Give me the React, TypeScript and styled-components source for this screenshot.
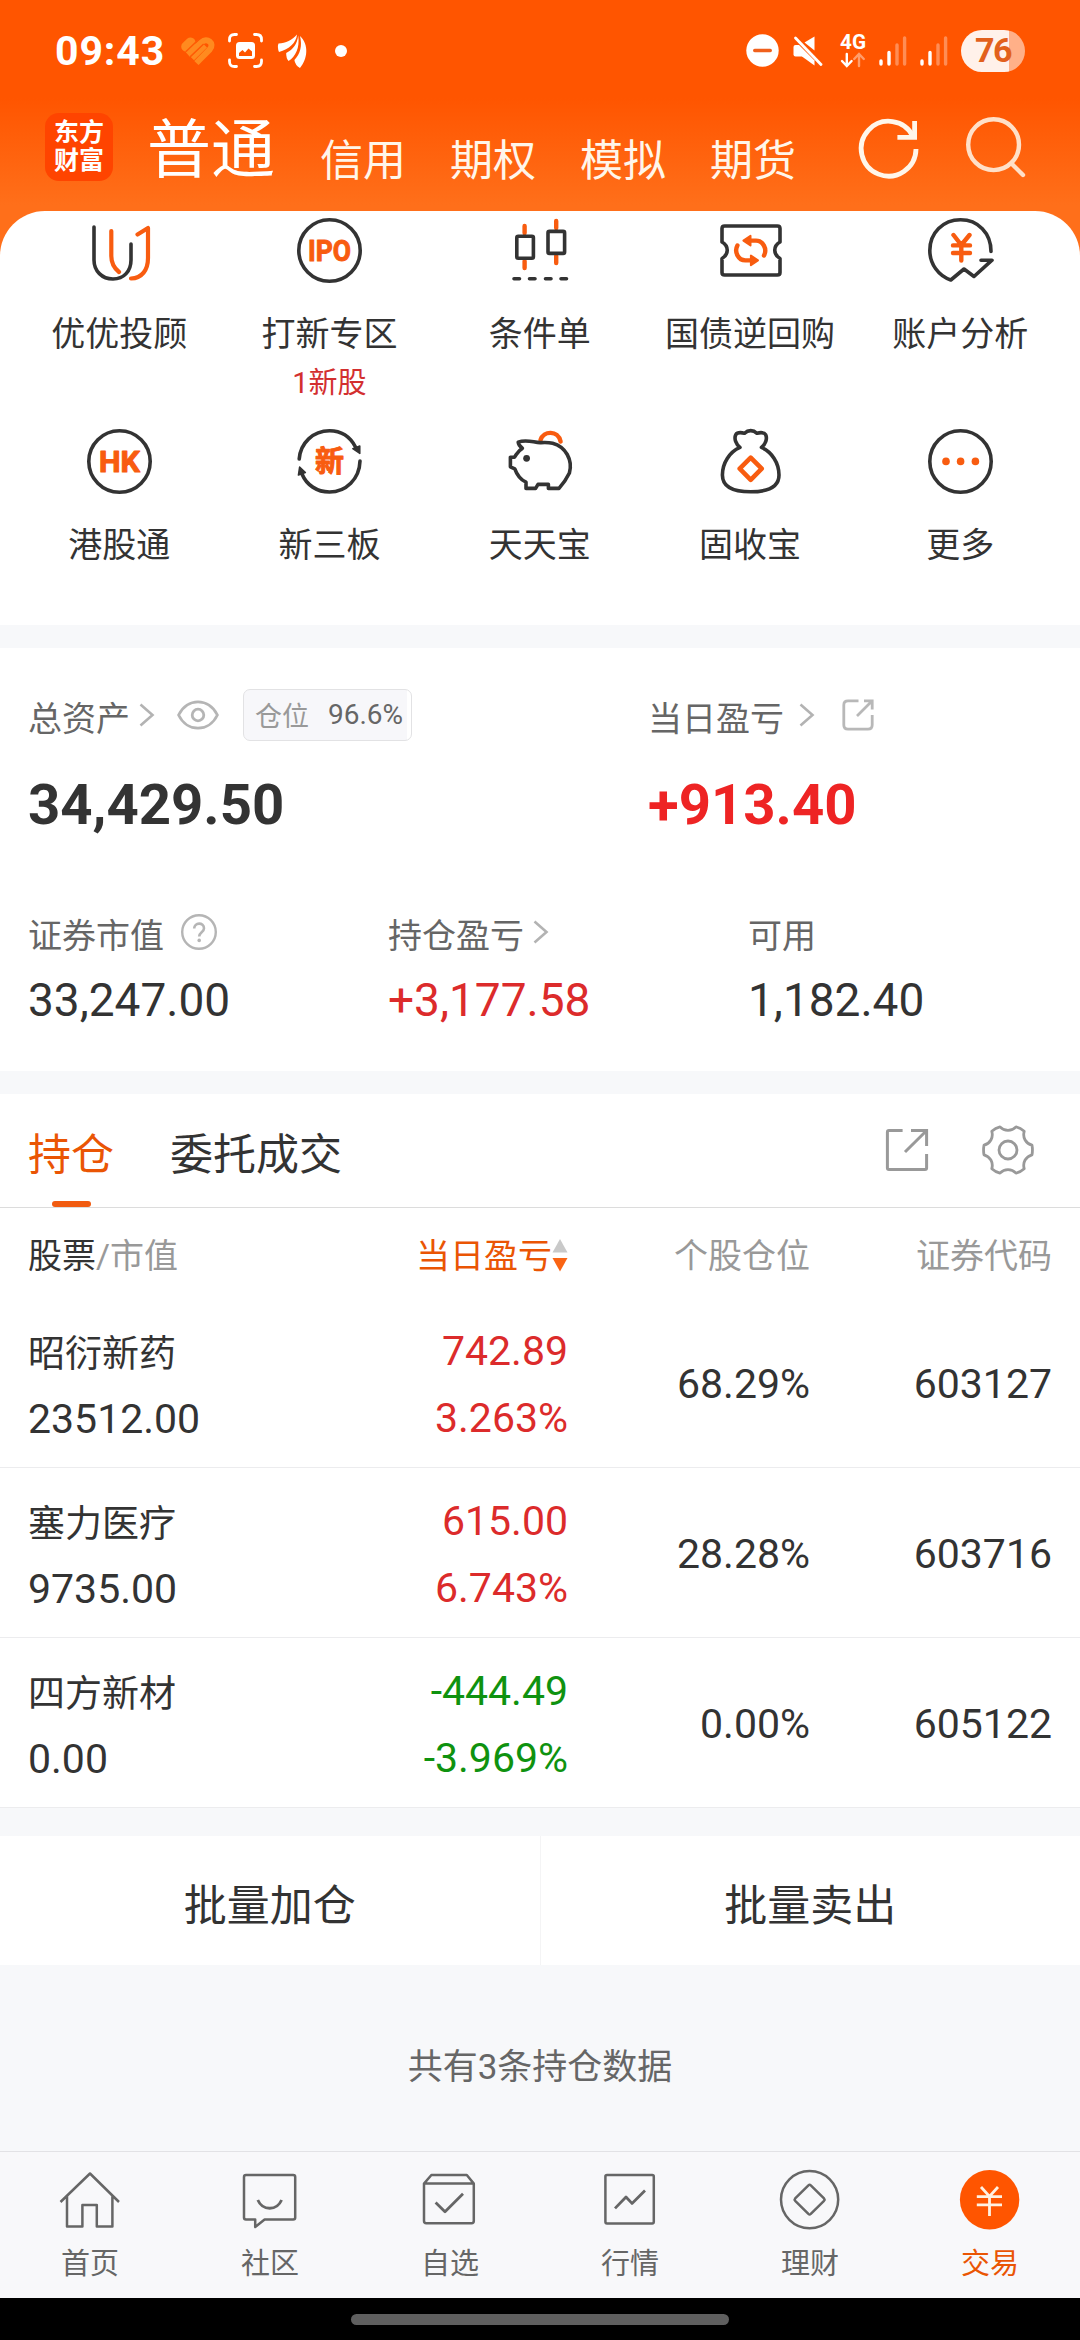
import React from 'react';
import styled, { createGlobalStyle, css } from 'styled-components';

const ORANGE = '#ea5504';
const ICON_ORANGE = '#f85c10';
const DARK = '#333333';
const RED = '#dc2b2b';
const GREEN = '#0f920f';
const BAND = '#f7f8fa';

const GlobalStyle = createGlobalStyle`
  * { box-sizing: border-box; }
  html, body { margin: 0; padding: 0; background: #000; }
  body {
    font-family: Roboto, "Noto Sans CJK SC", sans-serif;
    color: ${DARK};
    -webkit-font-smoothing: antialiased;
  }
  svg { display: block; flex: none; overflow: visible; }
`;

const Screen = styled.div`
  width: 1080px;
  height: 2340px;
  display: flex;
  flex-direction: column;
  background: ${BAND};
  overflow: hidden;
  white-space: nowrap;
`;

/* ---------- header ---------- */
const Header = styled.header`
  height: 211px;
  flex: none;
  position: relative;
`;

const HeaderBackdrop = styled.div`
  background: linear-gradient(#ff5500 0, #ff5500 98px, #ff6f1a 205px, #ff6f1a 100%);
  flex: none;
`;

const StatusBar = styled.div`
  height: 100px;
  padding: 0 55px;
  display: flex;
  justify-content: space-between;
  align-items: flex-start;
  color: #fff;
`;

const StatusGroup = styled.div`
  height: 101px;
  display: flex;
  align-items: center;
`;

const Clock = styled.span`
  font-size: 41px;
  font-weight: 700;
  letter-spacing: 0.9px;
  line-height: 48px;
  width: 126px;
`;

const Spacer = styled.span<{ $w: number }>`
  flex: none;
  width: ${(p) => p.$w}px;
`;

const Battery = styled.span`
  width: 64px;
  height: 42px;
  margin-right: 0;
  border-radius: 21px;
  background: linear-gradient(90deg, #fff1ea 0, #fff1ea 48px, #ffb088 48px);
  color: #e2601c;
  font-size: 34px;
  font-weight: 700;
  line-height: 41px;
  text-align: center;
  letter-spacing: -1.5px;
`;

const AppBar = styled.div`
  height: 111px;
  padding: 13px 54px 0 45px;
  display: flex;
  align-items: flex-start;
  color: #fff;
`;

const Logo = styled.div`
  width: 68px;
  height: 68px;
  padding-top: 6px;
  border-radius: 14px;
  background: #ff4400;
  font-size: 25px;
  font-weight: 700;
  line-height: 28px;
  text-align: center;
`;

const AccountTitle = styled.h1`
  margin: 0 0 0 34px;
  font-size: 64px;
  font-weight: 400;
  line-height: 76px;
  width: 173px;
`;

const AccountTabs = styled.nav`
  display: flex;
  gap: 44px;
  padding-top: 22px;
`;

const AccountTab = styled.span`
  font-size: 43px;
  line-height: 52px;
  color: #fff6ea;
`;

const AppBarActions = styled.div`
  margin-left: auto;
  padding-top: 5px;
  display: flex;
  gap: 47px;
`;

/* ---------- shortcuts ---------- */
const Shortcuts = styled.section`
  height: 414px;
  padding: 7px 14.5px 0 14px;
  border-radius: 45px 45px 0 0;
  background: #fff;
  display: grid;
  grid-template-columns: repeat(5, 1fr);
  grid-auto-rows: 211px;
`;

const Shortcut = styled.div`
  display: flex;
  flex-direction: column;
  align-items: center;
`;

const ShortcutLabel = styled.span`
  margin-top: 31px;
  font-size: 34px;
  line-height: 40px;
`;

const ShortcutNote = styled.span`
  margin-top: 12px;
  font-size: 29px;
  line-height: 34px;
  color: #d32f2f;
`;

const Band = styled.div<{ $h: number }>`
  height: ${(p) => p.$h}px;
  flex: none;
  background: ${BAND};
`;

/* ---------- assets ---------- */
const Assets = styled.section`
  height: 423px;
  flex: none;
  padding: 41px 0 0 28px;
  background: #fff;
`;

const AssetRow = styled.div<{ $cols: string; $top?: number }>`
  display: grid;
  grid-template-columns: ${(p) => p.$cols};
  margin-top: ${(p) => p.$top ?? 0}px;
`;

const AssetHead = styled.div<{ $h: number }>`
  height: ${(p) => p.$h}px;
  display: flex;
  align-items: center;
`;

const AssetLabel = styled.span`
  margin-top: 8px;
  font-size: 34px;
  line-height: 42px;
  color: #666;
`;

const BigAmount = styled.div<{ $up?: boolean }>`
  margin-top: 35px;
  font-size: 56.3px;
  font-weight: 700;
  line-height: 60px;
  color: ${(p) => (p.$up ? '#ee2424' : DARK)};
`;

const Amount = styled.div<{ $up?: boolean }>`
  margin-top: 19px;
  font-size: 46px;
  line-height: 54px;
  color: ${(p) => (p.$up ? RED : DARK)};
`;

const PositionBadge = styled.span`
  width: 169px;
  height: 52px;
  padding-left: 11px;
  display: flex;
  align-items: center;
  border: 1px solid #e2e2e4;
  border-radius: 7px;
  background: linear-gradient(90deg, #f7f7fa 163px, #fff 163px);
  font-size: 28px;
  color: #666;
`;

const BadgeName = styled.span`
  width: 73px;
  font-size: 27px;
  color: #999;
`;

/* ---------- holdings ---------- */
const TabBar = styled.div`
  height: 114px;
  flex: none;
  padding: 0 47px 0 28px;
  display: flex;
  align-items: center;
  border-bottom: 1px solid #dcdcdc;
  background: #fff;
`;

const Tab = styled.div<{ $active?: boolean }>`
  height: 113px;
  margin-right: 56px;
  padding-top: 31px;
  display: flex;
  flex-direction: column;
  align-items: center;
  font-size: 43px;
  line-height: 60px;
  color: ${(p) => (p.$active ? ORANGE : DARK)};
`;

const TabMarker = styled.i`
  width: 39px;
  height: 6px;
  margin-top: 16px;
  border-radius: 3px;
  background: #f15b10;
`;

const TabActions = styled.div`
  margin-left: auto;
  padding-bottom: 1px;
  display: flex;
  align-items: center;
  gap: 54px;
`;

const tableColumns = css`
  display: grid;
  grid-template-columns: 200px 340px 242px 242px;
  padding-left: 28px;
  background: #fff;
`;

const TableHead = styled.div`
  ${tableColumns}
  height: 90px;
  flex: none;
  padding-top: 5px;
  align-items: center;
  font-size: 34px;
  line-height: 42px;
  color: #999;
`;

const HeadCell = styled.div<{ $right?: boolean; $active?: boolean }>`
  display: flex;
  align-items: center;
  justify-content: ${(p) => (p.$right ? 'flex-end' : 'flex-start')};
  color: ${(p) => (p.$active ? ORANGE : 'inherit')};
`;

const Strong = styled.span`
  color: ${DARK};
`;

const HoldingRow = styled.div`
  ${tableColumns}
  height: 170px;
  flex: none;
  border-bottom: 1px solid #ececee;
  font-size: 41px;
`;

const StockCell = styled.div`
  padding-top: 25px;
  display: flex;
  flex-direction: column;
  line-height: 64px;
`;

const StockName = styled.span`
  font-size: 37px;
`;

const ProfitCell = styled.div<{ $down?: boolean }>`
  padding-top: 20px;
  display: flex;
  flex-direction: column;
  align-items: flex-end;
  line-height: 67px;
  color: ${(p) => (p.$down ? GREEN : RED)};
`;

const PlainCell = styled.div`
  text-align: right;
  line-height: 172px;
`;

const BatchActions = styled.div`
  height: 129px;
  flex: none;
  display: flex;
  background: #fff;
`;

const BatchButton = styled.button`
  flex: 1;
  padding: 3px 0 0;
  border: 0;
  border-right: 1px solid #f4f4f5;
  background: none;
  font: inherit;
  font-size: 43px;
  color: ${DARK};
  &:last-child { border-right: 0; }
`;

const Summary = styled.p`
  height: 186px;
  flex: none;
  margin: 0;
  padding-top: 78px;
  font-size: 35px;
  line-height: 50px;
  text-align: center;
  color: #666;
`;

/* ---------- bottom navigation ---------- */
const BottomNav = styled.nav`
  height: 147px;
  flex: none;
  padding-top: 18px;
  border-top: 1px solid #e2e2e5;
  background: #f8f8fa;
  display: grid;
  grid-template-columns: repeat(6, 1fr);
`;

const NavItem = styled.div<{ $active?: boolean }>`
  display: flex;
  flex-direction: column;
  align-items: center;
  gap: 17px;
  font-size: 29px;
  line-height: 34px;
  color: ${(p) => (p.$active ? ORANGE : '#666')};
`;

const GestureBar = styled.div`
  height: 42px;
  flex: none;
  padding-top: 16px;
  background: #000;
`;

const GesturePill = styled.div`
  width: 378px;
  height: 11px;
  margin: 0 auto;
  border-radius: 6px;
  background: #5f5f5f;
`;

/* ---------- drawings ---------- */
const Sc = ({ children }: { children: React.ReactNode }) => (
  <svg width="65" height="65" viewBox="0 0 65 65" fill="none" stroke={DARK} strokeWidth="3.6" strokeLinecap="round" strokeLinejoin="round">
    {children}
  </svg>
);

const Yoyo = () => (
  <Sc>
    <path d="M7 9V42C7 53 15 61 26 61S44 53 44 42V26" />
    <path stroke={ICON_ORANGE} strokeWidth="4.2" d="M24.3 13V38C24.3 46 27 50 32 54M50.5 16.5L61 10V40C61 52 55 60 44 60.5" />
  </Sc>
);

const IconText = ({ size, y, len, children }: { size: number; y: number; len: number; children: string }) => (
  <text x="32.5" y={y} textAnchor="middle" textLength={len} lengthAdjust="spacingAndGlyphs" fontSize={size} fontWeight="700" fill={ICON_ORANGE} stroke={ICON_ORANGE} strokeWidth="1">
    {children}
  </text>
);

const Ipo = () => (
  <Sc>
    <circle cx="32.5" cy="32.5" r="30.7" />
    <IconText size={30} y={43} len={43}>IPO</IconText>
  </Sc>
);

const Hk = () => (
  <Sc>
    <circle cx="32.5" cy="32.5" r="30.7" />
    <IconText size={29} y={43} len={41}>HK</IconText>
  </Sc>
);

const Candles = () => (
  <Sc>
    <path stroke={ICON_ORANGE} strokeWidth="4.4" d="M17.6 8V15M17.6 43V50M49.2 3V10M49.2 38V45" />
    <rect x="9.8" y="18.2" width="16.6" height="22" rx="1.5" />
    <rect x="41" y="13.4" width="16.6" height="22" rx="1.5" />
    <path d="M7 60.7H12.5M22.5 60.7H28M38.5 60.7H44M54 60.7H59.5" />
  </Sc>
);

const Ticket = () => (
  <Sc>
    <path d="M7 8H59.4Q62 8 62 10.6V24C55 28 55 36.5 62 40.5V54.4Q62 57 59.4 57H6.6Q4 57 4 54.4V40.5C11 36.5 11 28 4 24V10.6Q4 8 6.6 8Z" />
    <g stroke={ICON_ORANGE} strokeWidth="4.4">
      <path d="M32 22.6H38C45 22.6 49.5 31 46 37.5" />
      <path d="M25.4 22.6L32.5 17.8V27.4Z" fill={ICON_ORANGE} strokeWidth="2" />
      <path d="M33.4 42.4H27.4C20.4 42.4 15.9 34 19.4 27.5" />
      <path d="M40 42.4L32.9 37.6V47.2Z" fill={ICON_ORANGE} strokeWidth="2" />
    </g>
  </Sc>
);

const Analysis = () => (
  <Sc>
    <path d="M63 33.5C63 15 50 1.8 32.5 1.8S1.8 15 1.8 32.5C1.8 46 10.5 58 22.8 62L36 51L46 58.5L64 42.2H53" />
    <path stroke={ICON_ORANGE} strokeWidth="4.4" d="M25.5 17L33.3 27L41.5 17M25 27.4H42M25 35H42M33.3 27V42.5" />
  </Sc>
);

const NewBoard = () => (
  <Sc>
    <path d="M2.2 30C3.5 14 16 1.8 32.5 1.8C44.5 1.8 53.5 8.5 58.5 18M63 32C62.5 50 49 63 32.5 63C20 63 9.5 56 5 45" />
    <path d="M55.8 19.6L62.8 17V24.5ZM1.4 46L2.6 38L8.4 43.6Z" fill={DARK} strokeWidth="1.5" />
    <IconText size={29} y={43} len={29}>新</IconText>
  </Sc>
);

const Piggy = () => (
  <Sc>
    <path stroke={ICON_ORANGE} strokeWidth="4.4" d="M33.5 11C36.5 1.5 51 1 53.6 12.5" />
    <path d="M34 13.6C28 14.2 20 9.6 11.2 13.2C11.4 16 13 17.6 15.4 19.3C11 21.6 10 24.6 7.4 28.2H3.4V37.8L7.8 39.8C10 46 13.6 50.6 19 53.2V59.4H28.6L31 55.4H41.4V59.4H52C56.5 54.2 60 49 62.4 44C66 31 58.6 17.6 45.6 14.2C42 13.4 38 13.4 34 13.6Z" />
    <circle cx="19.6" cy="29.3" r="3.4" fill={DARK} stroke="none" />
  </Sc>
);

const MoneyBag = () => (
  <Sc>
    <path d="M22 18.4C11.5 23 4.4 34 4.4 46C4.4 58 16 62.8 32.7 62.8S61 58 61 46C61 34 53.9 23 43.4 18.4C47.5 15.5 49.6 9.6 47.6 5.6C45.8 2.6 41.6 3.6 38.8 4.2C35.4 0.8 30 0.8 26.6 4.2C23.8 3.6 19.6 2.6 17.8 5.6C15.8 9.6 18 15.5 22 18.4Z" />
    <path stroke={ICON_ORANGE} strokeWidth="4.6" d="M32.7 28.6L43.7 39.7L32.7 50.8L21.7 39.7Z" />
  </Sc>
);

const More = () => (
  <Sc>
    <circle cx="32.5" cy="32.5" r="30.7" />
    <g fill={ICON_ORANGE} stroke="none">
      <circle cx="18" cy="32.4" r="3.8" />
      <circle cx="32.6" cy="32.4" r="3.8" />
      <circle cx="47.4" cy="32.4" r="3.8" />
    </g>
  </Sc>
);

const Chevron = () => (
  <svg width="16" height="24" viewBox="0 0 16 24" fill="none" stroke="#b3b3b3" strokeWidth="2.6">
    <path d="M1.5 1.5L13.5 12L1.5 22.5" />
  </svg>
);

const Eye = () => (
  <svg width="42" height="30" viewBox="0 0 42 30" fill="none" stroke="#b5b5b5" strokeWidth="2.8">
    <path d="M1.6 15C10 -2.6 32 -2.6 40.4 15C32 32.6 10 32.6 1.6 15Z" />
    <circle cx="21" cy="15" r="5.8" />
  </svg>
);

const Help = () => (
  <svg width="36" height="36" viewBox="0 0 36 36" fill="none" stroke="#b5b5b5" strokeWidth="2.4">
    <circle cx="18" cy="18" r="16.8" />
    <path d="M13.2 14.6C13.2 8 23 8 23 14.2C23 18.4 18.2 18.2 18.2 22.6" strokeWidth="2.6" />
    <circle cx="18.2" cy="26.4" r="1.8" fill="#b5b5b5" stroke="none" />
  </svg>
);

const ShareSmall = () => (
  <svg width="32" height="32" viewBox="0 0 32 32" fill="none" stroke="#b8b8b8" strokeWidth="2.8">
    <path d="M16.5 1.8H6Q1.8 1.8 1.8 6V26Q1.8 30.2 6 30.2H26Q30.2 30.2 30.2 26V16M22 1.8H30.2V10.4M30 2L15 17" />
  </svg>
);

const ShareLarge = () => (
  <svg width="44" height="44" viewBox="0 0 44 44" fill="none" stroke="#999" strokeWidth="3">
    <path d="M17.6 2.6H4Q2.4 2.6 2.4 4.2V40Q2.4 41.4 4 41.4H40Q41.6 41.4 41.6 40V26M26 2.6H41.6V18M41.4 2.8L20 24" />
  </svg>
);

const Gear = () => (
  <svg width="50" height="50" viewBox="0 0 50 50" fill="none" stroke="#999" strokeWidth="2.8" strokeLinejoin="round">
    <circle cx="25" cy="25" r="9" />
    <path d="M17 1.9C21.5 6.6 28.5 6.6 33 1.9C36 2.6 39 4.3 41.2 6.3C39.4 12.6 42.8 18.4 49 20.2C49.6 23.4 49.6 26.6 49 29.8C42.8 31.6 39.4 37.4 41.2 43.7C39 45.7 36 47.4 33 48.1C28.5 43.4 21.5 43.4 17 48.1C14 47.4 11 45.7 8.8 43.7C10.6 37.4 7.2 31.6 1 29.8C0.4 26.6 0.4 23.4 1 20.2C7.2 18.4 10.6 12.6 8.8 6.3C11 4.3 14 2.6 17 1.9Z" />
  </svg>
);

const SortMark = () => (
  <svg width="16" height="33" viewBox="0 0 16 33">
    <path d="M8 0L15.5 13.5H0.5Z" fill="#c9c9c9" />
    <path d="M8 32.5L0.5 19H15.5Z" fill="#fa6414" />
  </svg>
);

const Refresh = () => (
  <svg width="60" height="60" viewBox="0 0 60 60" fill="none" stroke="#fff6ea" strokeWidth="4.8">
    <path d="M57 31A27.4 27.4 0 1 1 54.2 18.6" />
    <path d="M55.6 3V19.4H38.4" />
  </svg>
);

const Search = () => (
  <svg width="60" height="60" viewBox="0 0 60 60" fill="none" stroke="#ffe0c8" strokeWidth="4.4" strokeLinecap="round">
    <circle cx="27.6" cy="26.7" r="25.4" />
    <path d="M45.5 45.5L57 57" />
  </svg>
);

const HeartMark = () => (
  <svg width="34" height="30" viewBox="0 0 34 30" fill="none" stroke="#ff8a1f">
    <path d="M5.2 10.6L9.6 6.4" strokeWidth="10" strokeLinecap="round" />
    <path d="M6.8 18.6L20.6 6.2C26 1.2 34 7.4 28.8 13.4L15.4 27" strokeWidth="6" />
    <path d="M11.4 22.6L24.4 9.8" strokeWidth="4.6" />
    <path d="M5 15.6L17.6 3.6M9.4 20.4L22.6 8" stroke="#ff5a05" strokeWidth="1.4" />
  </svg>
);

const ScreenshotMark = () => (
  <svg width="35" height="35" viewBox="0 0 35 35" fill="none" stroke="#fff" strokeWidth="2.8" strokeLinecap="round">
    <path d="M1.5 8V6.5Q1.5 1.5 6.5 1.5H8.5M26.5 1.5H28.5Q33.5 1.5 33.5 6.5V8M33.5 27V28.5Q33.5 33.5 28.5 33.5H26.5M8.5 33.5H6.5Q1.5 33.5 1.5 28.5V27" />
    <rect x="8" y="9" width="19" height="17" rx="3.5" fill="#fff" stroke="none" />
    <path d="M11 23V20L14.5 17L17 19.5L20.5 15.5L24 18.5V23Z" fill="#ff5500" stroke="none" />
  </svg>
);

const FeatherMark = () => (
  <svg width="30" height="34" viewBox="0 0 30 34" fill="#fff">
    <path d="M0.5 9.5C8 9 14 6.5 19 0.5C18.4 8.5 11 15.5 1 18Q-1 13 0.5 9.5Z" />
    <path d="M20.2 1.5C22 14 17.4 22.6 10.6 27Q8 24 8.2 19C15.4 15.4 19.2 10 20.2 1.5Z" />
    <path d="M22 2C31.4 11 29.5 25 22 34Q17 31 16.4 26C22.4 19.6 24.4 12 22 2Z" />
  </svg>
);

const Dot = () => (
  <svg width="12" height="12" viewBox="0 0 12 12"><circle cx="6" cy="6" r="6" fill="#fff" /></svg>
);

const DoNotDisturb = () => (
  <svg width="33" height="33" viewBox="0 0 33 33">
    <circle cx="16.5" cy="16.5" r="16.2" fill="#fff" />
    <rect x="7" y="14.8" width="19" height="3.4" rx="1.7" fill="#f0601c" />
  </svg>
);

const Mute = () => (
  <svg width="30" height="30" viewBox="0 0 30 30" fill="#fff">
    <path d="M11.5 6.5L21.5 0.5V14.5Z" />
    <path d="M2.5 2L28 28.5" stroke="#ff5500" strokeWidth="6" />
    <path d="M2.5 2L28 28.5" stroke="#fff" strokeWidth="2.8" strokeLinecap="round" />
    <path d="M0.5 11Q0.5 9 2.5 9H6L10 13V20.5H2.5Q0.5 20.5 0.5 18.5Z" />
    <path d="M10 13L21.5 24.6V29.5L9 20.5Z" />
  </svg>
);

const Network = () => (
  <svg width="26" height="34" viewBox="0 0 26 34" fill="none" strokeWidth="2.4" strokeLinecap="round">
    <text x="13" y="15.4" textAnchor="middle" fontSize="20.5" fontWeight="700" fill="#fff" textLength="26" lengthAdjust="spacingAndGlyphs">4G</text>
    <path stroke="#fff" d="M6.8 20V31.5M2 27L6.8 32L11.6 27" />
    <path stroke="#ff9d6b" d="M19 32V20.5M14.2 25L19 20L23.8 25" />
  </svg>
);

const Signal = () => (
  <svg width="28" height="30" viewBox="0 0 28 30" strokeWidth="3.4" strokeLinecap="round">
    <path stroke="#fff" d="M2 25V28M10 16.5V28" />
    <path stroke="#ff8d55" d="M18 9V28M25.6 2V28" />
  </svg>
);

const Nv = ({ children }: { children: React.ReactNode }) => (
  <svg width="60" height="60" viewBox="0 0 60 60" fill="none" stroke="#666" strokeWidth="2.5" strokeLinejoin="round">
    {children}
  </svg>
);

const HomeIcon = () => (
  <Nv>
    <path d="M0.5 32L30 3.5L59 32M7 26.5V56.6H22.4V35H36.8V56.6H52.4V26.5" />
  </Nv>
);

const ChatIcon = () => (
  <Nv>
    <path d="M6 5H53.2Q55.2 5 55.2 7V47.6Q55.2 49.6 53.2 49.6H24.6L15.2 57V49.6H6Q4 49.6 4 47.6V7Q4 5 6 5Z" />
    <path d="M17.8 30C22.6 41 36.8 41 41.6 30" strokeWidth="2.8" />
  </Nv>
);

const PickIcon = () => (
  <Nv>
    <path d="M4 13.6L11.4 5H46.8L53.8 13.6V51Q53.8 53.2 51.6 53.2H6.2Q4 53.2 4 51ZM4 13.6H53.8" />
    <path d="M15.6 32.6L25 41.8L43 23.8" strokeWidth="2.8" />
  </Nv>
);

const MarketIcon = () => (
  <Nv>
    <rect x="5.4" y="5" width="48.4" height="48.4" rx="1.6" />
    <path d="M15 38.4L26 27L32 33.4L45 20.6" strokeWidth="2.8" />
  </Nv>
);

const FinanceIcon = () => (
  <Nv>
    <circle cx="29.6" cy="29.6" r="28.6" />
    <path d="M28.4 15.3Q29.6 14.2 30.8 15.3L44 28.4Q45 29.6 44 30.8L30.8 43.9Q29.6 45 28.4 43.9L15.2 30.8Q14.2 29.6 15.2 28.4Z" />
  </Nv>
);

const TradeIcon = () => (
  <Nv>
    <circle cx="29.6" cy="29.7" r="29.7" fill="#ff5500" stroke="none" />
    <path stroke="#fff1e2" strokeWidth="2.8" d="M21 17L29.5 26.4L38 17M16.8 26.6H42M16.8 34.8H42M29.5 26V46" />
  </Nv>
);

/* ---------- data ---------- */
const shortcuts = [
  { label: '优优投顾', icon: <Yoyo /> },
  { label: '打新专区', icon: <Ipo />, note: '1新股' },
  { label: '条件单', icon: <Candles /> },
  { label: '国债逆回购', icon: <Ticket /> },
  { label: '账户分析', icon: <Analysis /> },
  { label: '港股通', icon: <Hk /> },
  { label: '新三板', icon: <NewBoard /> },
  { label: '天天宝', icon: <Piggy /> },
  { label: '固收宝', icon: <MoneyBag /> },
  { label: '更多', icon: <More /> },
];

const holdings = [
  { name: '昭衍新药', value: '23512.00', profit: '742.89', rate: '3.263%', share: '68.29%', code: '603127', down: false },
  { name: '塞力医疗', value: '9735.00', profit: '615.00', rate: '6.743%', share: '28.28%', code: '603716', down: false },
  { name: '四方新材', value: '0.00', profit: '-444.49', rate: '-3.969%', share: '0.00%', code: '605122', down: true },
];

const navItems = [
  { label: '首页', icon: <HomeIcon /> },
  { label: '社区', icon: <ChatIcon /> },
  { label: '自选', icon: <PickIcon /> },
  { label: '行情', icon: <MarketIcon /> },
  { label: '理财', icon: <FinanceIcon /> },
  { label: '交易', icon: <TradeIcon />, active: true },
];

export default function App() {
  return (
    <Screen>
      <GlobalStyle />
      <HeaderBackdrop>
        <Header>
          <StatusBar>
            <StatusGroup>
              <Clock>09:43</Clock>
              <HeartMark />
              <Spacer $w={13} />
              <ScreenshotMark />
              <Spacer $w={15} />
              <FeatherMark />
              <Spacer $w={27} />
              <Dot />
            </StatusGroup>
            <StatusGroup>
              <DoNotDisturb />
              <Spacer $w={14} />
              <Mute />
              <Spacer $w={17} />
              <Network />
              <Spacer $w={13} />
              <Signal />
              <Spacer $w={13} />
              <Signal />
              <Spacer $w={13} />
              <Battery>76</Battery>
            </StatusGroup>
          </StatusBar>
          <AppBar>
            <Logo>东方<br />财富</Logo>
            <AccountTitle>普通</AccountTitle>
            <AccountTabs>
              {['信用', '期权', '模拟', '期货'].map((t) => (
                <AccountTab key={t}>{t}</AccountTab>
              ))}
            </AccountTabs>
            <AppBarActions>
              <Refresh />
              <Search />
            </AppBarActions>
          </AppBar>
        </Header>
        <Shortcuts>
          {shortcuts.map((s) => (
            <Shortcut key={s.label}>
              {s.icon}
              <ShortcutLabel>{s.label}</ShortcutLabel>
              {s.note && <ShortcutNote>{s.note}</ShortcutNote>}
            </Shortcut>
          ))}
        </Shortcuts>
      </HeaderBackdrop>

      <Band $h={23} />

      <Assets>
        <AssetRow $cols="620px 1fr">
          <div>
            <AssetHead $h={51}>
              <AssetLabel>总资产</AssetLabel>
              <Spacer $w={9} />
              <Chevron />
              <Spacer $w={22} />
              <Eye />
              <Spacer $w={24} />
              <PositionBadge>
                <BadgeName>仓位</BadgeName>
                96.6%
              </PositionBadge>
            </AssetHead>
            <BigAmount>34,429.50</BigAmount>
          </div>
          <div>
            <AssetHead $h={51}>
              <AssetLabel>当日盈亏</AssetLabel>
              <Spacer $w={15} />
              <Chevron />
              <Spacer $w={27} />
              <ShareSmall />
            </AssetHead>
            <BigAmount $up>+913.40</BigAmount>
          </div>
        </AssetRow>
        <AssetRow $cols="360px 360px 1fr" $top={75}>
          <div>
            <AssetHead $h={44}>
              <AssetLabel>证券市值</AssetLabel>
              <Spacer $w={17} />
              <Help />
            </AssetHead>
            <Amount>33,247.00</Amount>
          </div>
          <div>
            <AssetHead $h={44}>
              <AssetLabel>持仓盈亏</AssetLabel>
              <Spacer $w={9} />
              <Chevron />
            </AssetHead>
            <Amount $up>+3,177.58</Amount>
          </div>
          <div>
            <AssetHead $h={44}>
              <AssetLabel>可用</AssetLabel>
            </AssetHead>
            <Amount>1,182.40</Amount>
          </div>
        </AssetRow>
      </Assets>

      <Band $h={23} />

      <TabBar>
        <Tab $active>
          持仓
          <TabMarker />
        </Tab>
        <Tab>委托成交</Tab>
        <TabActions>
          <ShareLarge />
          <Gear />
        </TabActions>
      </TabBar>

      <TableHead>
        <HeadCell><Strong>股票</Strong>/市值</HeadCell>
        <HeadCell $right $active>当日盈亏<SortMark /></HeadCell>
        <HeadCell $right>个股仓位</HeadCell>
        <HeadCell $right>证券代码</HeadCell>
      </TableHead>
      {holdings.map((h) => (
        <HoldingRow key={h.code}>
          <StockCell>
            <StockName>{h.name}</StockName>
            <span>{h.value}</span>
          </StockCell>
          <ProfitCell $down={h.down}>
            <span>{h.profit}</span>
            <span>{h.rate}</span>
          </ProfitCell>
          <PlainCell>{h.share}</PlainCell>
          <PlainCell>{h.code}</PlainCell>
        </HoldingRow>
      ))}

      <Band $h={28} />

      <BatchActions>
        <BatchButton>批量加仓</BatchButton>
        <BatchButton>批量卖出</BatchButton>
      </BatchActions>

      <Summary>共有3条持仓数据</Summary>

      <BottomNav>
        {navItems.map((n) => (
          <NavItem key={n.label} $active={n.active}>
            {n.icon}
            {n.label}
          </NavItem>
        ))}
      </BottomNav>
      <GestureBar>
        <GesturePill />
      </GestureBar>
    </Screen>
  );
}
